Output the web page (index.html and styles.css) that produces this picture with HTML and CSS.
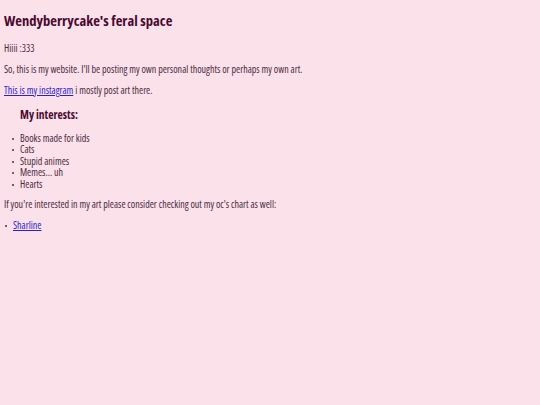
FILE: index.html
```html
<!DOCTYPE html>
<html>
<head>
<meta charset="utf-8">
<title>Wendyberrycake's feral space</title>
<link rel="stylesheet" href="styles.css">
</head>
<body>
<h1 class="title">Wendyberrycake's feral space</h1>
<p class="text">Hiiii :333</p>
<p class="text">So, this is my website. I'll be posting my own personal thoughts or perhaps my own art.</p>
<p class="text"><a class="link" href="#">This is my instagram</a> i mostly post art there.</p>
<div class="interests">
  <h3 class="subtitle">My interests:</h3>
  <ul class="list">
    <li>Books made for kids</li>
    <li>Cats</li>
    <li>Stupid animes</li>
    <li>Memes... uh</li>
    <li>Hearts</li>
  </ul>
</div>
<p class="text note">If you're interested in my art please consider checking out my oc's chart as well:</p>
<ul class="oc-list">
  <li><a class="link" href="#">Sharline</a></li>
</ul>
</body>
</html>
```
FILE: styles.css
```css
html {
  background: #fbe1ea;
}
body {
  margin: 4px;
  font-family: "Open Sans", "DejaVu Sans Condensed", sans-serif;
  font-stretch: 75%;
  font-size: 10px;
  line-height: 11.5px;
  color: #4b2b3d;
}
.title {
  font-size: 14.6px;
  line-height: 18px;
  font-weight: bold;
  color: #4a0a30;
  margin: 7px 0 13.5px;
}
.text {
  margin: 9.5px 0;
}
.note {
  margin-top: 8.5px;
}
.link {
  color: #2b1fd0;
}
.interests {
  padding-left: 16px;
}
.subtitle {
  font-size: 11.5px;
  line-height: 15px;
  font-weight: bold;
  color: #4a0a30;
  margin: 11px 0 10.5px;
}
.list {
  margin: 10.5px 0 8.5px;
  padding-left: 0;
  list-style: none;
}
.oc-list {
  margin: 9.5px 0;
  padding-left: 9px;
  list-style: none;
}
.list li::before,
.oc-list li::before {
  content: "";
  display: inline-block;
  width: 2px;
  height: 2px;
  border-radius: 1px;
  background: currentColor;
  vertical-align: middle;
  margin-left: -8px;
  margin-right: 6px;
}
```
